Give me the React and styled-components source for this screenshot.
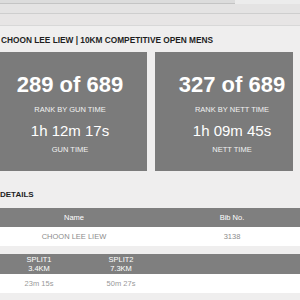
import React from 'react';
import styled, { createGlobalStyle } from 'styled-components';

const GlobalStyle = createGlobalStyle`
  html, body {
    margin: 0;
    padding: 0;
    background: #efeeee;
    overflow: hidden;
  }
  body {
    width: 300px;
    height: 300px;
    font-family: Arial, 'Liberation Sans', sans-serif;
  }
`;

const stats = [
  { rank: '289 of 689', rankLabel: 'RANK BY GUN TIME', time: '1h 12m 17s', timeLabel: 'GUN TIME' },
  { rank: '327 of 689', rankLabel: 'RANK BY NETT TIME', time: '1h 09m 45s', timeLabel: 'NETT TIME' },
];

const splits = [
  { name: 'SPLIT1', dist: '3.4KM', time: '23m 15s' },
  { name: 'SPLIT2', dist: '7.3KM', time: '50m 27s' },
];

const App = () => (
  <>
    <GlobalStyle />
    <Page>
      <TopBar>
        <SearchBox />
      </TopBar>
      <Band $bg="#e4e3e3" $line="#cecece" $h={9} />
      <Band $bg="#e7e5e5" $line="#d8d8d8" $h={11} />

      <Title>CHOON LEE LIEW | 10KM COMPETITIVE OPEN MENS</Title>

      <CardRow>
        {stats.map((s) => (
          <Card key={s.rankLabel}>
            <Rank>{s.rank}</Rank>
            <Label>{s.rankLabel}</Label>
            <Time>{s.time}</Time>
            <Label $last>{s.timeLabel}</Label>
          </Card>
        ))}
      </CardRow>

      <SectionTitle>DETAILS</SectionTitle>

      <Table $cols="162px 1fr">
        <HeadCell>Name</HeadCell>
        <HeadCell>Bib No.</HeadCell>
        <Cell>CHOON LEE LIEW</Cell>
        <Cell>3138</Cell>
      </Table>

      <Table $cols="92px 72px 1fr" $gap>
        {splits.map((sp) => (
          <HeadCell key={sp.name} $tall>
            {sp.name}
            <br />
            {sp.dist}
          </HeadCell>
        ))}
        <HeadCell $tall />
        {splits.map((sp) => (
          <Cell key={sp.time} $soft>{sp.time}</Cell>
        ))}
        <Cell />
      </Table>
    </Page>
  </>
);

const Page = styled.div`
  display: flex;
  flex-direction: column;
  width: 300px;
`;

const TopBar = styled.div`
  height: 4px;
  background: #ececec;
  display: flex;
`;

const SearchBox = styled.div`
  width: 235px;
  height: 3px;
  background: #dcdcdc;
  border-bottom: 1px solid #c4c4c4;
`;

const Band = styled.div`
  height: ${(p) => p.$h}px;
  background: ${(p) => p.$bg};
  border-bottom: 1px solid ${(p) => p.$line};
`;

const Title = styled.div`
  margin: 9px 0 7px 1px;
  font-size: 8.3px;
  line-height: 10px;
  font-weight: bold;
  color: #1e1e1e;
  white-space: nowrap;
`;

const CardRow = styled.div`
  display: grid;
  grid-template-columns: 154px 154px;
  gap: 8px;
  width: 300px;
  margin-left: -7px;
  overflow: hidden;
`;

const Card = styled.div`
  background: #7b7b7b;
  height: 119px;
  padding-top: 22px;
  box-sizing: border-box;
  display: flex;
  flex-direction: column;
  align-items: center;
  color: #fff;
`;

const Rank = styled.div`
  font-size: 22px;
  line-height: 22px;
  font-weight: bold;
  margin-bottom: 10px;
`;

const Label = styled.div`
  font-size: 7.5px;
  line-height: 8px;
  color: #f2f2f2;
  margin-bottom: ${(p) => (p.$last ? 0 : 9)}px;
`;

const Time = styled.div`
  font-size: 15px;
  line-height: 15px;
  margin-bottom: 8px;
`;

const SectionTitle = styled.div`
  margin: 18.7px 0 8.3px 0;
  font-size: 8px;
  line-height: 10px;
  font-weight: bold;
  color: #1e1e1e;
`;

const Table = styled.div`
  display: grid;
  grid-template-columns: ${(p) => p.$cols};
  width: 316px;
  margin-left: -7px;
  margin-top: ${(p) => (p.$gap ? 8 : 0)}px;
`;

const HeadCell = styled.div`
  height: ${(p) => (p.$tall ? 20 : 19)}px;
  background: #7f7f7f;
  color: #fff;
  font-size: 7.5px;
  line-height: 9px;
  display: flex;
  align-items: center;
  justify-content: center;
  text-align: center;
`;

const Cell = styled.div`
  height: 19px;
  background: #fff;
  color: ${(p) => (p.$soft ? '#999' : '#8c8c8c')};
  font-size: 7.5px;
  display: flex;
  align-items: center;
  justify-content: center;
`;

export default App;
